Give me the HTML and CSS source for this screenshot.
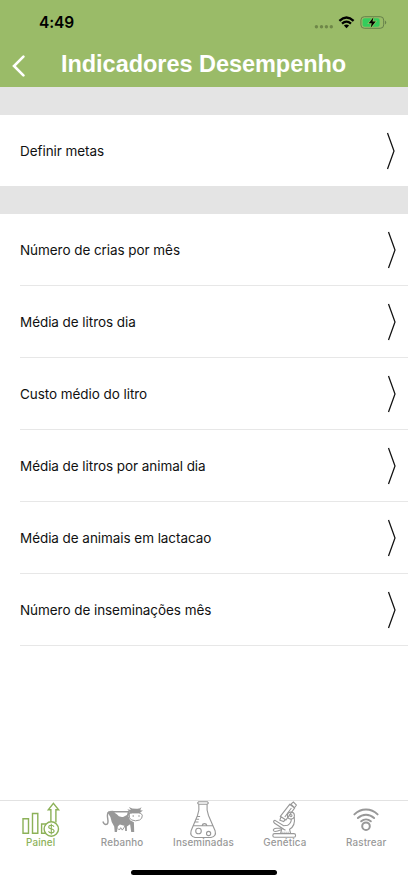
FILE: index.html
```html
<!DOCTYPE html>
<html lang="pt-BR">
<head>
<meta charset="utf-8">
<meta name="viewport" content="width=device-width, initial-scale=1">
<title>Indicadores Desempenho</title>
<link rel="stylesheet" href="styles.css">
</head>
<body>
<div class="app">
  <header class="header">
    <div class="status">
      <span class="time">4:49</span>
      <svg class="indicators" viewBox="312 12 78 20" aria-hidden="true">
        <g fill="#6e8748"><circle cx="316.4" cy="26.7" r="1.7"/><circle cx="321.5" cy="26.7" r="1.7"/><circle cx="326.4" cy="26.7" r="1.7"/><circle cx="331.3" cy="26.7" r="1.7"/></g>
        <g fill="none" stroke="#000" stroke-width="2.3"><path d="M339.4 20.8Q346.5 14.3 353.6 20.8"/><path d="M342 23.6Q346.5 19.6 351 23.6"/></g>
        <path d="M343.9 25.5Q346.5 23.3 349.1 25.5L346.5 28.2z"/>
        <rect x="360.9" y="16.7" width="22.8" height="11.6" rx="3.4" fill="none" stroke="#66804a"/>
        <rect x="362.6" y="18.3" width="17" height="8.4" rx="1.8" fill="#34cc5c"/>
        <path d="M385 20.5Q387.6 22.5 385 24.6z" fill="#66804a"/>
        <path d="M373.4 17.2L368.8 23.2H371.7L370.7 27.8L375.7 21.6H372.5z" stroke="#8fc260" stroke-width="1.6" paint-order="stroke"/>
      </svg>
    </div>
    <div class="navbar">
      <svg class="back" viewBox="0 0 14 22" aria-hidden="true"><path d="M11.4 1.6L2 11L11.4 20.4"/></svg>
      <h1 class="title">Indicadores Desempenho</h1>
    </div>
  </header>
  <main class="content">
    <div class="gap"></div>
    <div class="row row-first"><span>Definir metas</span><svg class="chevron" viewBox="0 0 10 38"><path d="M1.5 1L8 19L1.5 37"/></svg></div>
    <div class="gap"></div>
    <div class="list">
      <div class="row"><span>Número de crias por mês</span><svg class="chevron" viewBox="0 0 10 38"><path d="M1.5 1L8 19L1.5 37"/></svg></div>
      <div class="row"><span>Média de litros dia</span><svg class="chevron" viewBox="0 0 10 38"><path d="M1.5 1L8 19L1.5 37"/></svg></div>
      <div class="row"><span>Custo médio do litro</span><svg class="chevron" viewBox="0 0 10 38"><path d="M1.5 1L8 19L1.5 37"/></svg></div>
      <div class="row"><span>Média de litros por animal dia</span><svg class="chevron" viewBox="0 0 10 38"><path d="M1.5 1L8 19L1.5 37"/></svg></div>
      <div class="row"><span>Média de animais em lactacao</span><svg class="chevron" viewBox="0 0 10 38"><path d="M1.5 1L8 19L1.5 37"/></svg></div>
      <div class="row"><span>Número de inseminações mês</span><svg class="chevron" viewBox="0 0 10 38"><path d="M1.5 1L8 19L1.5 37"/></svg></div>
    </div>
  </main>
  <nav class="tabs">
    <div class="tab active">
      <svg class="icon" viewBox="18.7 1 44 38"><path d="M22.7 18.7H28.2V33.3H22.7zM32.2 13.5H37.5V33.3H32.2z"/><path d="M45.4 33.3H41.3V24H45.8M50.6 21.4V9.7H48L53.1 3.3L58.3 9.7H55.6V22.6"/><circle cx="51" cy="29" r="7.2"/><path stroke-width="1.1" d="M53.7 26.7Q52.9 25.2 51 25.2Q48.4 25.2 48.4 27.1Q48.4 28.6 51 29Q53.8 29.4 53.8 31.1Q53.8 32.9 51 32.9Q48.9 32.9 48.2 31.3M51 23.7V34.4"/></svg>
      <span>Painel</span>
    </div>
    <div class="tab">
      <svg class="icon" viewBox="100.1 1 44 38"><path class="fill" d="M107.5 12.2Q110 10.5 114 10.9H129L130.5 13.5L128.5 16L130.2 20.2L134 22.3L134.3 32H131.3L130.2 24.3L127 26.5L120 24.5L118 26.2L117 32H114.8L114.3 26.4Q111.3 22.5 110.5 17z"/><path d="M109.2 12Q106.8 13 107.8 18.5Q109 24.5 106 24.5Q104 24.5 103 21.5"/><path class="cut" d="M114.4 12.5H127.8L127 15L123.2 17Q118.5 17.5 117.2 14.6z"/><path class="fill" d="M127.5 9.2L131 10L129 7Q132.6 9.2 137.7 8.8Q140.6 8.6 141.6 7L140.4 10.2L143 10.4L139.5 13.2L130.5 13.2z"/><path class="cut line" d="M129.4 14.5Q130.3 12.8 132.7 12.9H138.5Q141.7 12.8 142.4 15.2Q142.6 18.8 139.7 20Q135.6 21.7 131.6 19.9Q128.7 18.5 129.4 14.5z"/><circle class="fill" cx="133.3" cy="16" r=".8"/><circle class="fill" cx="139.1" cy="16" r=".8"/><path d="M118 28.5L119.5 30L120.8 27.7L122.4 30.1L124 27.8L125 26" stroke-width="1"/><path class="fill" d="M124.8 25H127V31H125.3z"/></svg>
      <span>Rebanho</span>
    </div>
    <div class="tab">
      <svg class="icon thin" viewBox="181.5 1 44 38"><path d="M199.2 1.7H207.8Q210 3.2 207.6 4.2Q206.9 10 209 15.5L215.6 30.8Q217.2 36.5 211.5 37.5H195.6Q190 36.5 191.6 30.8L198 15.5Q200.1 10 199.3 4.2Q197 3.1 199.2 1.7zM199.4 4.2H207.6M193.8 25.8H213.4M196.4 19.2H199.6M195.2 22H199M197.6 16.5H200.6M202.6 25.6Q203 23.6 205 23.6Q207 23.6 207.4 25.6"/><circle cx="199" cy="31" r="2.8"/><circle cx="209.1" cy="33.5" r="2.1"/></svg>
      <span>Inseminadas</span>
    </div>
    <div class="tab">
      <svg class="icon thin" viewBox="262.9 1 44 38"><path d="M290.8 4.2L293.3 2L296.3 5L294.4 7.7zM289.6 4.3L294.5 8.1L285.8 20L280.2 16.3zM291.3 8L284.7 17M280.8 17L279.8 20.2L283.6 21.5L285 19.7"/><circle cx="290.8" cy="15.6" r="3.5"/><circle cx="290.8" cy="15.6" r="1.1"/><path d="M294.1 17Q295.6 25.6 289.5 29.3L290.5 33.5H280.5L281.5 29.5Q274.5 32.5 273.4 30.8Q272.5 28.7 276.6 28.3H282.2L274.2 23Q272.5 20.8 274.8 20.4L283.5 25.7L287.6 25.2Q291.4 22.8 291.2 19.1M282.1 28.4L285.4 30.2"/><rect x="272.7" y="33.6" width="22.8" height="3.6" rx="1.8"/><path d="M281.5 32.2H289.5" stroke-dasharray="1 1"/></svg>
      <span>Genética</span>
    </div>
    <div class="tab">
      <svg class="icon wave" viewBox="344.3 1 44 38"><path d="M354.7 14.4C361.2 7.9 371.4 7.9 377.9 14.4M358.2 18C362.9 13.6 369.7 13.6 374.4 18M361.5 21.3C364.3 18.9 368.3 18.9 371.1 21.3"/><circle cx="366.3" cy="26.2" r="3.8"/></svg>
      <span>Rastrear</span>
    </div>
  </nav>
  <div class="home-indicator"></div>
</div>
</body>
</html>
```
FILE: styles.css
```css
* { box-sizing: border-box; }
body { margin: 0; background: #fff; font-family: Inter, "Liberation Sans", sans-serif; color: #111; }
.app { width: 408px; height: 883px; display: flex; flex-direction: column; overflow: hidden; }
.header { height: 87px; background: #9abb68; flex: none; }
.status { height: 44px; padding: 12px 18px 0 39px; display: flex; justify-content: space-between; align-items: flex-start; }
.time { font-size: 15.5px; line-height: 22px; font-weight: 600; color: #000; letter-spacing: -.1px; }
.indicators { width: 78px; height: 20px; }
.navbar { display: flex; align-items: center; height: 43px; padding: 0 0 4px 12px; }
.back { width: 14px; height: 22px; margin-top: 4px; }
.back path { fill: none; stroke: #fff; stroke-width: 2.6; stroke-linecap: round; }
.title { margin: 0 0 0 35px; color: #fff; font: bold 23.5px/30px "Liberation Sans", sans-serif; letter-spacing: -.04px; white-space: nowrap; }
.content { flex: 1; }
.gap { height: 28px; background: #e4e4e4; }
.row { height: 72px; display: flex; align-items: center; justify-content: space-between; padding-right: 11.5px; border-bottom: 1px solid #e7e7e7; font-size: 13.5px; line-height: 20px; letter-spacing: -.06px; }
.row-first { height: 71px; margin-left: 20px; padding-right: 12.5px; border: 0; }
.list { padding-left: 20px; }
.chevron { width: 10px; height: 38px; }
.chevron path { fill: none; stroke: #111; stroke-width: 1.25; }
.tabs { height: 62px; padding-right: 1px; display: grid; grid-template-columns: repeat(5, 1fr); box-shadow: 0 -1px #e2e2e2; flex: none; }
.tab { display: flex; flex-direction: column; align-items: center; color: #989898; font-size: 9.8px; line-height: 12px; letter-spacing: .15px; font-weight: 500; }
.tab span { margin-top: -2px; }
.active { color: #8cb158; }
.icon { width: 44px; height: 38px; fill: none; stroke: currentColor; stroke-width: 1.4; }
.thin { stroke-width: 1.1; }
.wave { stroke-width: 2; stroke-linecap: round; }
.fill { fill: currentColor; stroke: none; }
.cut { fill: #fff; stroke: none; }
.line { stroke: currentColor; stroke-width: 1; }
.home-indicator { width: 146px; height: 5px; border-radius: 3px; background: #000; margin: 7px auto 8px; flex: none; }
```
